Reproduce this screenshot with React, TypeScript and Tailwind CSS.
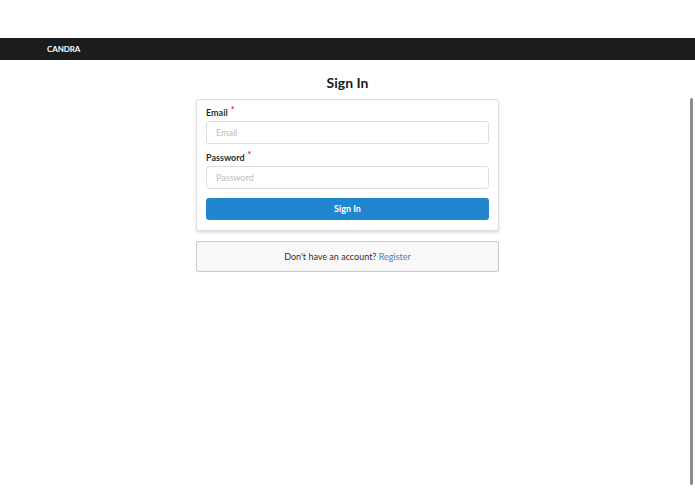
export default function App() {
  return (
    <div className="relative min-h-[494px] bg-white font-['Lato',sans-serif] text-[rgba(0,0,0,0.87)]">
      {/* Top nav */}
      <div className="h-[38px]" />
      <div className="flex h-[22px] items-center bg-[#1b1c1d] pl-[47px]">
        <span className="text-[8px] font-bold tracking-[-0.1px] text-white">CANDRA</span>
      </div>

      {/* Sign in column */}
      <div className="mx-auto mt-[14px] w-[303px]">
        <h2 className="mb-[7px] text-center text-[14px] font-bold leading-[18px] text-[#1b1c1d]">Sign In</h2>

        <form
          className="rounded-[3px] border border-[rgba(34,36,38,0.15)] bg-white px-[9px] pt-[7px] pb-[10px] shadow-[0_2px_3px_0_rgba(34,36,38,0.15)]"
          onSubmit={e => e.preventDefault()}
        >
          <div className="mb-[8px]">
            <label className="mb-[3px] block text-[9px] font-bold leading-[11px]">
              Email<span className="relative -top-[3px] ml-[3px] text-[#db2828]">*</span>
            </label>
            <input
              placeholder="Email"
              className="block h-[23px] w-full rounded-[3px] border border-[rgba(34,36,38,0.15)] px-[9px] text-[9px] outline-none placeholder:text-[#bdbdbd]"
            />
          </div>
          <div className="mb-[9px]">
            <label className="mb-[3px] block text-[9px] font-bold leading-[11px]">
              Password<span className="relative -top-[3px] ml-[3px] text-[#db2828]">*</span>
            </label>
            <input
              type="password"
              placeholder="Password"
              className="block h-[23px] w-full rounded-[3px] border border-[rgba(34,36,38,0.15)] px-[9px] text-[9px] outline-none placeholder:text-[#bdbdbd]"
            />
          </div>
          <button className="block h-[22px] w-full rounded-[3px] bg-[#2185d0] text-[9px] font-bold text-white">
            Sign In
          </button>
        </form>

        <div className="mt-[10px] flex h-[31px] items-center justify-center rounded-[3px] border border-[rgba(34,36,38,0.22)] bg-[#f8f8f9] text-[9px] text-[rgba(0,0,0,0.87)]">
          <span>
            Don&apos;t have an account? <a className="text-[#4183c4]">Register</a>
          </span>
        </div>
      </div>

      {/* overlay scrollbar */}
      <div className="absolute right-[2px] top-[98px] h-[387px] w-[3px] rounded-full bg-[#8c8c8c]" />
    </div>
  )
}
